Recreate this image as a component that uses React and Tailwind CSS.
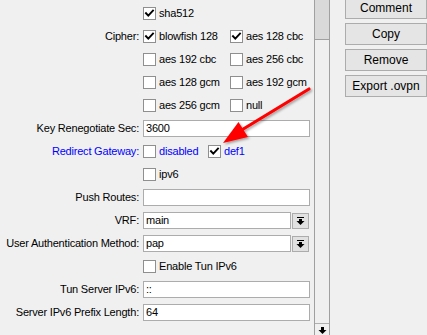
import React from "react";

const font = { fontFamily: '"Liberation Sans", Arial, sans-serif' };

function Check({ checked }) {
  return (
    <span className="w-[13px] h-[13px] border border-[#8f8f8f] bg-white flex items-center justify-center shrink-0">
      {checked && (
        <svg width="11" height="11" viewBox="0 0 11 11">
          <path d="M2 5.2 L4.3 7.6 L9 2.6" stroke="#000" strokeWidth="1.9" fill="none" strokeLinecap="square" />
        </svg>
      )}
    </span>
  );
}

function Opt({ checked, label, w, blue }) {
  return (
    <div className={`flex items-center gap-[3px] ${w || ""}`}>
      <Check checked={checked} />
      <span className={blue ? "text-[#0000ff]" : "text-black"}>{label}</span>
    </div>
  );
}

function Row({ label, blue, children }) {
  return (
    <div className="h-[23px] flex items-center">
      <div className={`w-[139px] text-right whitespace-nowrap ${blue ? "text-[#0000ff]" : "text-black"}`}>{label}</div>
      <div className="ml-[4px] flex items-center">{children}</div>
    </div>
  );
}

function Input({ value, w = "w-[167px]" }) {
  return (
    <div className={`h-[17px] ${w} border border-[#acacac] bg-white px-[2px] flex items-center text-black`}>
      {value}
    </div>
  );
}

function DownIcon() {
  return (
    <svg width="9" height="8" viewBox="0 0 9 8">
      <rect x="1" y="0" width="7" height="1" fill="#000" />
      <rect x="3" y="2" width="3" height="2" fill="#000" />
      <polygon points="0.5,4 8.5,4 4.5,8" fill="#000" />
    </svg>
  );
}

function Select({ value }) {
  return (
    <div className="flex items-center">
      <Input value={value} w="w-[148px]" />
      <div className="ml-[1px] w-[17px] h-[16px] border border-[#acacac] bg-[#e1e1e1] flex items-center justify-center">
        <DownIcon />
      </div>
    </div>
  );
}

function Btn({ children }) {
  return (
    <div className="h-[22px] border border-[#acacac] bg-[#e5e5e5] flex items-center justify-center text-black text-[12px]">
      {children}
    </div>
  );
}

export default function App() {
  return (
    <div
      className="relative w-[427px] h-[335px] bg-[#f0f0f0] overflow-hidden flex text-[11px] tracking-[-0.2px] leading-none"
      style={font}
    >
      <div className="w-[314px] pt-[2px] flex flex-col">
        <Row label="">
          <Opt checked label="sha512" />
        </Row>
        <Row label="Cipher:">
          <Opt checked label="blowfish 128" w="w-[87px]" />
          <Opt checked label="aes 128 cbc" />
        </Row>
        <Row label="">
          <Opt label="aes 192 cbc" w="w-[87px]" />
          <Opt label="aes 256 cbc" />
        </Row>
        <Row label="">
          <Opt label="aes 128 gcm" w="w-[87px]" />
          <Opt label="aes 192 gcm" />
        </Row>
        <Row label="">
          <Opt label="aes 256 gcm" w="w-[87px]" />
          <Opt label="null" />
        </Row>
        <Row label="Key Renegotiate Sec:">
          <Input value="3600" />
        </Row>
        <Row label="Redirect Gateway:" blue>
          <Opt label="disabled" w="w-[65px]" blue />
          <Opt checked label="def1" blue />
        </Row>
        <Row label="">
          <Opt label="ipv6" />
        </Row>
        <Row label="Push Routes:">
          <Input value="" />
        </Row>
        <Row label="VRF:">
          <Select value="main" />
        </Row>
        <Row label="User Authentication Method:">
          <Select value="pap" />
        </Row>
        <Row label="">
          <Opt label="Enable Tun IPv6" />
        </Row>
        <Row label="Tun Server IPv6:">
          <Input value="::" />
        </Row>
        <Row label="Server IPv6 Prefix Length:">
          <Input value="64" />
        </Row>
      </div>

      <div className="w-[16px] h-full border-l border-r border-[#a0a0a0] flex flex-col">
        <div className="h-[40px] bg-[#d9d9d9] border-b border-[#a0a0a0]"></div>
        <div className="flex-1 bg-[#f0f0f0]"></div>
        <div className="h-[12px] border-t border-[#b0b0b0] flex items-start justify-center pt-[3px]">
          <svg width="9" height="7" viewBox="0 0 9 7">
            <rect x="3" y="0" width="3" height="3" fill="#000" />
            <polygon points="0.5,3 8.5,3 4.5,7" fill="#000" />
          </svg>
        </div>
      </div>

      <div className="ml-[15px] w-[82px] mt-[-3px] flex flex-col gap-[4px] tracking-normal">
        <Btn>Comment</Btn>
        <Btn>Copy</Btn>
        <Btn>Remove</Btn>
        <Btn>Export .ovpn</Btn>
      </div>

      <svg className="absolute left-0 top-0 pointer-events-none" width="427" height="335" viewBox="0 0 427 335">
        <defs>
          <filter id="sh" x="-20%" y="-20%" width="140%" height="140%">
            <feDropShadow dx="1.5" dy="1.5" stdDeviation="1.2" floodColor="#000" floodOpacity="0.35" />
          </filter>
        </defs>
        <g filter="url(#sh)">
          <line x1="309" y1="89" x2="240" y2="131" stroke="#ff0000" strokeWidth="3.2" strokeLinecap="round" />
          <polygon points="223,143 238.5,122 248,137" fill="#ff0000" />
        </g>
      </svg>
    </div>
  );
}
